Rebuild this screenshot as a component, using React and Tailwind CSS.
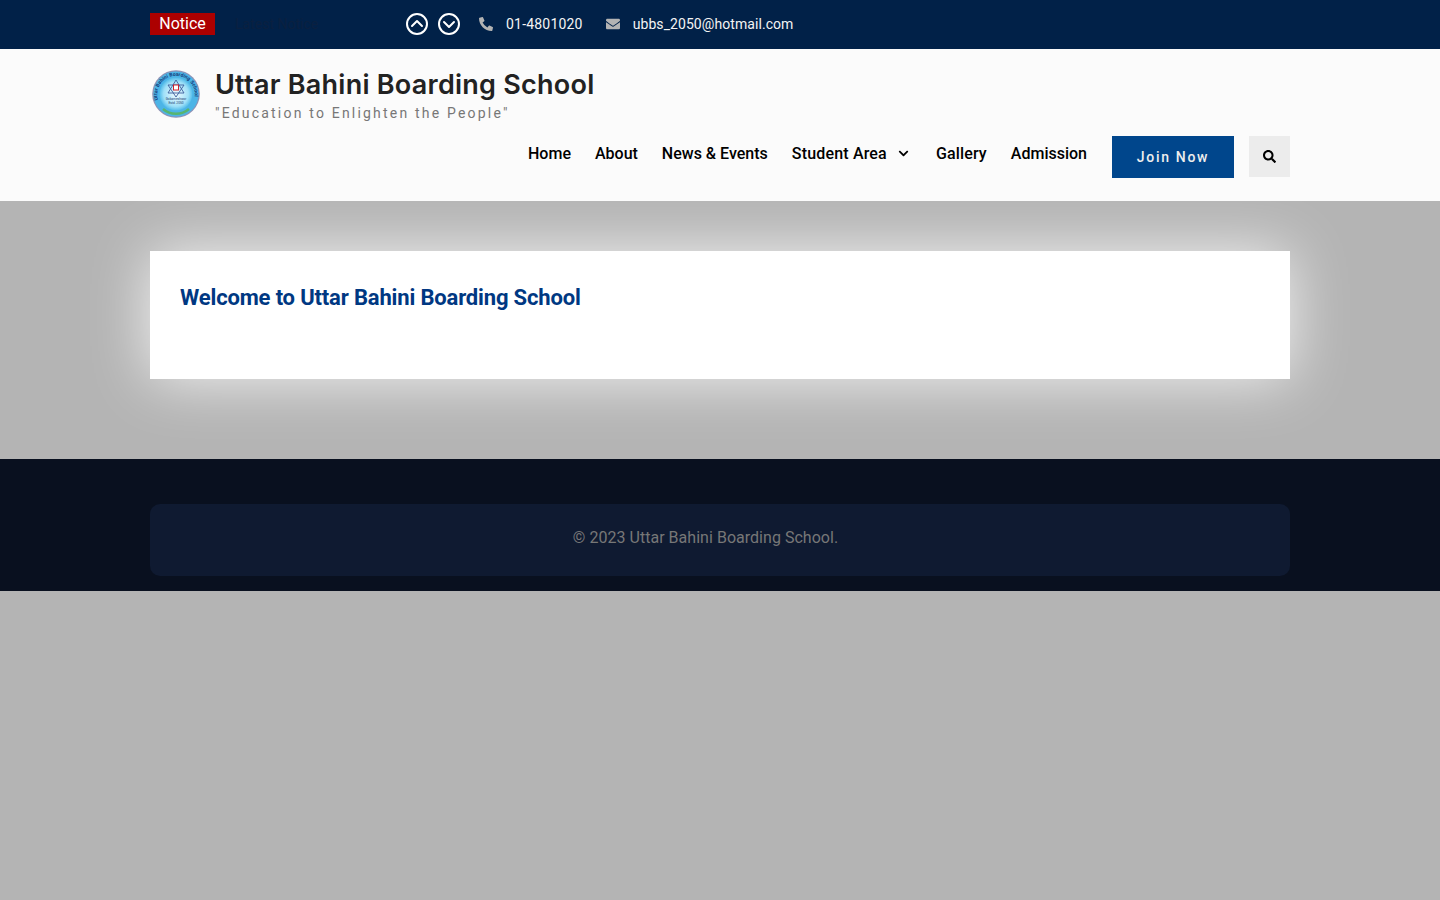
import { FaChevronDown, FaEnvelope, FaPhoneAlt, FaSearch } from 'react-icons/fa';

const NAV = ['Home', 'About', 'News & Events', 'Student Area', 'Gallery', 'Admission'];

function CircleArrow({ down }) {
  return (
    <svg width="22" height="22" viewBox="0 0 22 22" fill="none" stroke="#fff" strokeWidth="2">
      <circle cx="11" cy="11" r="10" />
      <path
        d={down ? 'M6 9 11 14l5-5' : 'M6 13 11 8l5 5'}
        strokeLinecap="round"
        strokeLinejoin="round"
      />
    </svg>
  );
}

function Logo() {
  return (
    <svg width="48" height="48" viewBox="0 0 48 48" className="shrink-0">
      <defs>
        <radialGradient id="logoFill">
          <stop offset="0%" stopColor="#f2fbff" />
          <stop offset="75%" stopColor="#9fe0f8" />
          <stop offset="100%" stopColor="#55bdea" />
        </radialGradient>
        <path id="logoArc" d="M6 30A18.8 18.8 0 1 1 42 30" />
      </defs>
      <circle cx="24" cy="24" r="23.8" fill="#8f92b5" />
      <circle cx="24" cy="24" r="22.6" fill="#4cb4e6" />
      <circle cx="24" cy="24" r="16.5" fill="url(#logoFill)" />
      <text fontSize="5" fontWeight="700" fill="#143a78" fontFamily="Roboto, sans-serif">
        <textPath href="#logoArc" textLength="66">Uttar Bahini Boarding School</textPath>
      </text>
      <path d="M24 10 32 23H16Z M24 27 16 15H32Z" fill="none" stroke="#3d5f9c" strokeWidth="0.9" />
      <rect x="21.5" y="15" width="5" height="5" fill="#fff" stroke="#d0202a" strokeWidth="1" />
      <path d="M11 39a20 20 0 0 0 26 0" fill="none" stroke="#58b56f" strokeWidth="2.5" />
      <text x="24" y="30" textAnchor="middle" fontSize="3.2" fill="#1b3a6b" fontFamily="Roboto, sans-serif">Gokarneshwor</text>
      <text x="24" y="34" textAnchor="middle" fontSize="3.2" fill="#1b3a6b" fontFamily="Roboto, sans-serif">Estd. 2050</text>
    </svg>
  );
}

export default function App() {
  return (
    <div className="min-h-[900px] bg-[#b4b4b4] font-['Roboto',sans-serif]">
      <div className="h-[49px] bg-[#012148]">
        <div className="mx-auto flex h-full w-[1140px] items-center pb-px">
          <span className="flex h-[22px] w-[65px] items-center justify-center bg-[#ac0000] text-base leading-none text-white">
            Notice
          </span>
          <span className="ml-5 w-[171px] text-sm text-[#0a2040]">Latest Notice</span>
          <div className="flex gap-2.5">
            <CircleArrow />
            <CircleArrow down />
          </div>
          <FaPhoneAlt className="ml-[19px] text-sm text-[#b3b3b3]" />
          <span className="ml-[13px] text-sm tracking-[0.2px] text-[#f4f4f4]">01-4801020</span>
          <FaEnvelope className="ml-[23px] text-sm text-[#b3b3b3]" />
          <span className="ml-[13px] text-sm tracking-[0.07px] text-[#f4f4f4]">ubbs_2050@hotmail.com</span>
        </div>
      </div>

      <header className="h-[152px] bg-[#fbfbfb]">
        <div className="mx-auto w-[1140px]">
          <div className="flex items-start pl-0.5 pt-[21px]">
            <Logo />
            <div className="ml-[15px]">
              <h1 className="font-['Inter',sans-serif] text-[27px] leading-[30px] font-semibold tracking-[0.25px] text-[#222222]">
                Uttar Bahini Boarding School
              </h1>
              <p className="mt-[3px] text-sm leading-5 tracking-[2.2px] text-[#777777]">
                "Education to Enlighten the People"
              </p>
            </div>
          </div>
          <nav className="mt-[13px] flex items-start justify-end">
            <ul className="flex gap-6 pt-[6px]">
              {NAV.map((item) => (
                <li key={item} className="flex items-center text-base leading-6 font-medium text-black">
                  {item === 'Student Area' ? <span className="tracking-[0.17px]">{item}</span> : null}
                  {item === 'Gallery' ? <span className="tracking-[0.15px]">{item}</span> : null}
                  {item !== 'Student Area' && item !== 'Gallery' ? item : null}
                  {item === 'Student Area' && <FaChevronDown className="mb-0.5 ml-[11px] mr-[3px] text-[11px]" />}
                </li>
              ))}
            </ul>
            <button className="ml-[25px] h-[42px] w-[122px] bg-[#00468c] text-sm font-medium tracking-[1.7px] text-[#eeeeee]">
              Join Now
            </button>
            <button className="ml-[15px] flex h-[41px] w-[41px] items-center justify-center bg-[#ececec] text-[13px] text-black">
              <FaSearch />
            </button>
          </nav>
        </div>
      </header>

      <main className="px-[150px] pt-[50px] pb-[80px]">
        <div className="h-[128px] bg-white px-[30px] pt-[30px] shadow-[0_0_60px_rgba(255,255,255,0.85)]">
          <h2 className="text-[22px] leading-[34px] font-bold tracking-[-0.16px] text-[#003882]">
            Welcome to Uttar Bahini Boarding School
          </h2>
        </div>
      </main>

      <footer className="h-[132px] bg-[#09101f] pt-[45px]">
        <div className="mx-auto h-[72px] w-[1140px] rounded-[10px] bg-[#0f1a31] pt-[22px] pr-[29px] text-center text-base leading-6 tracking-[0.03px] text-[#777777]">
          © 2023 Uttar Bahini Boarding School.
        </div>
      </footer>
    </div>
  );
}
